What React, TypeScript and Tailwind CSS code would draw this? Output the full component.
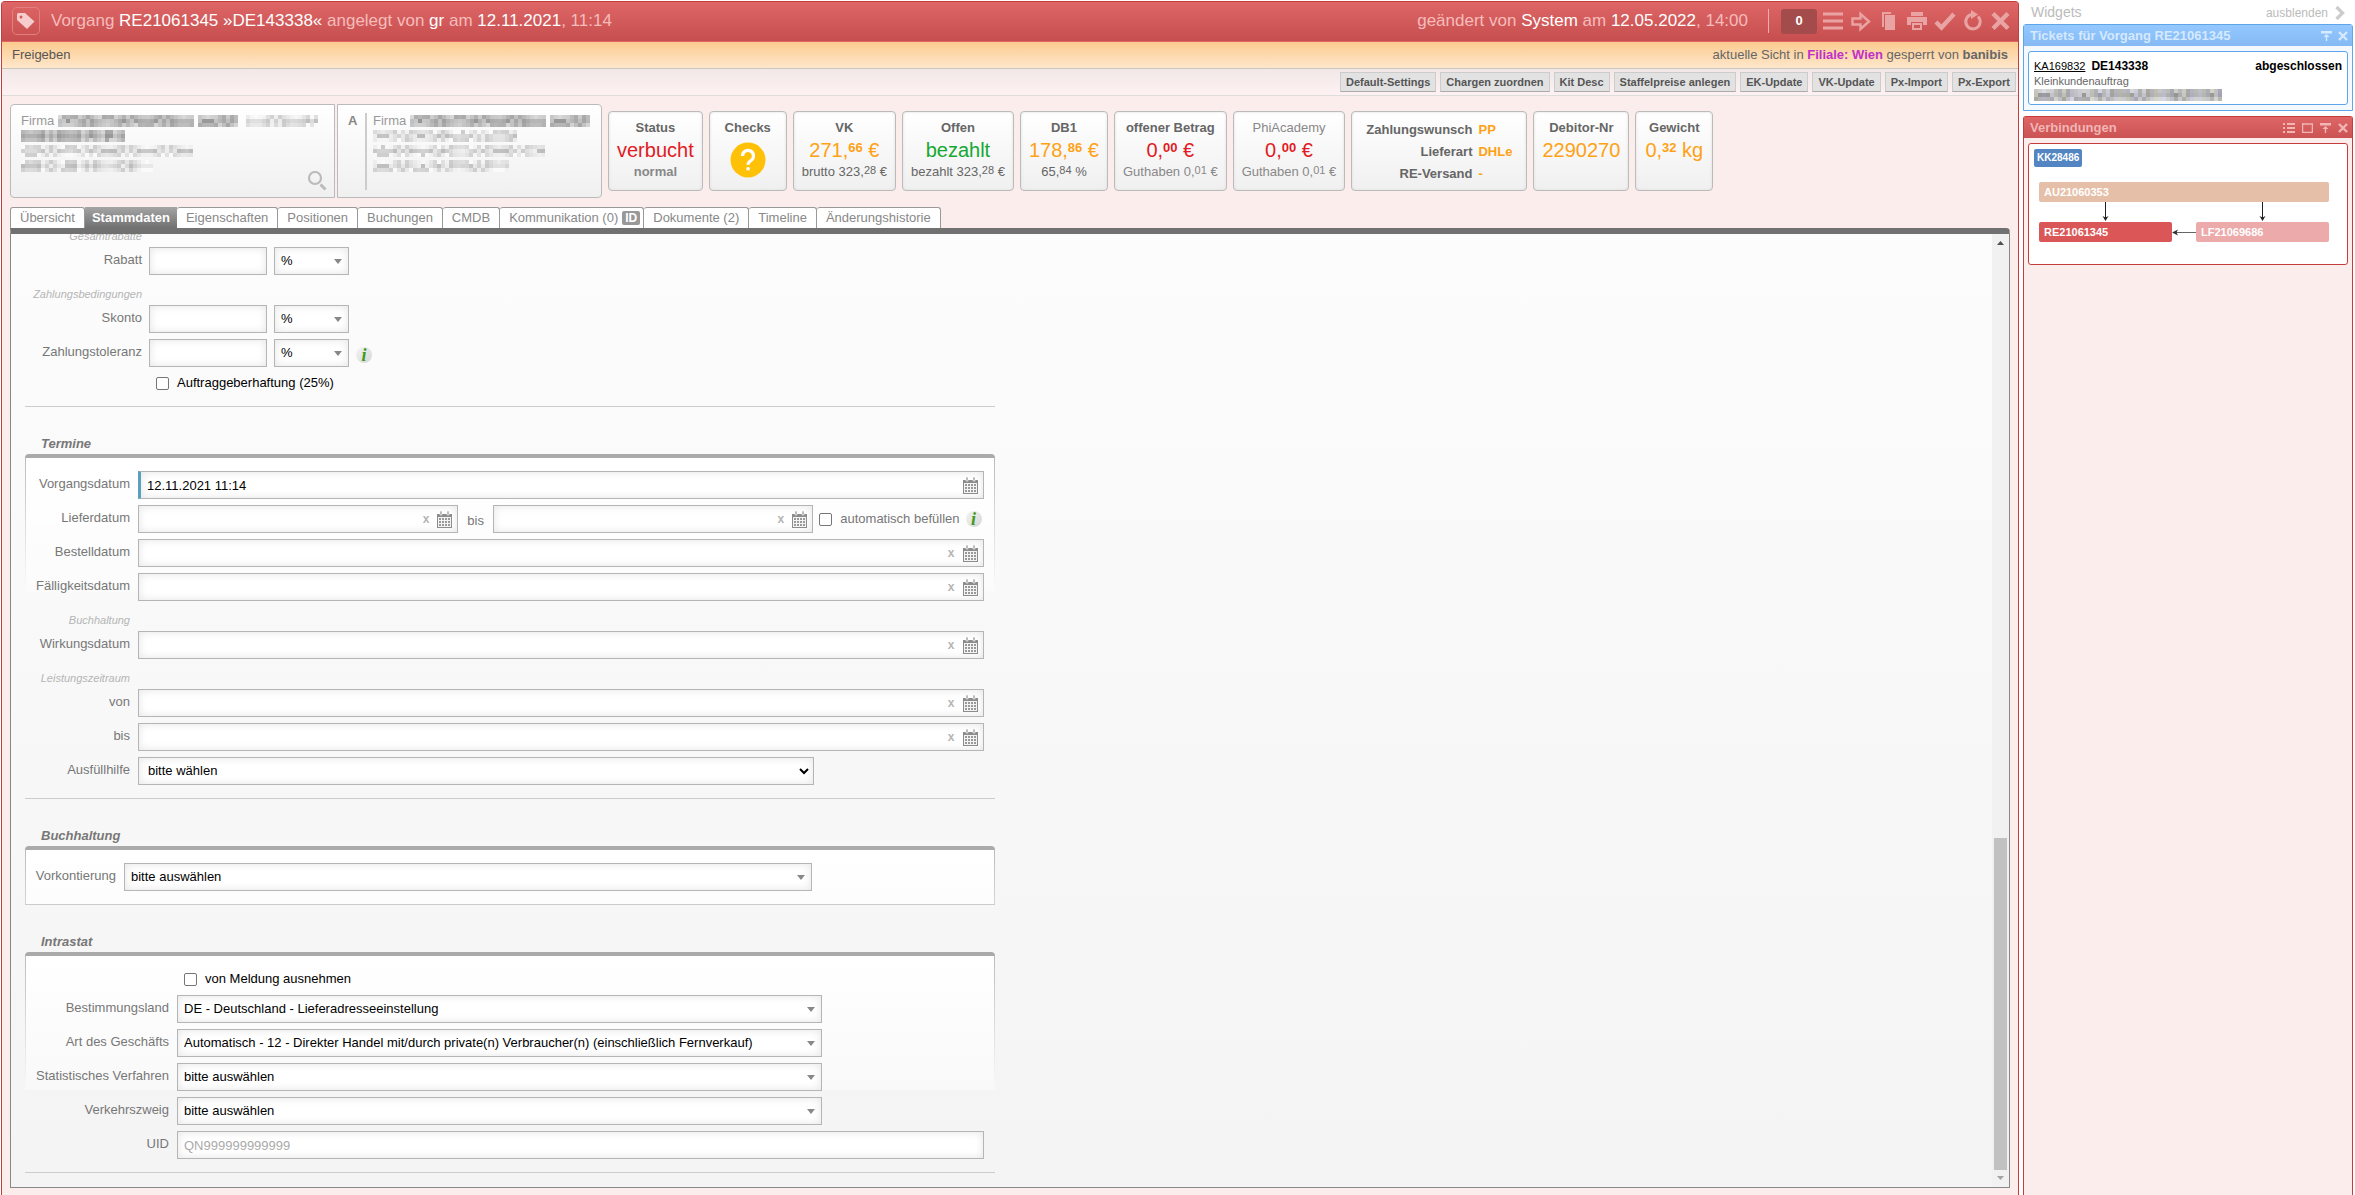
import type { ReactNode } from "react";

/* ------- Data -------  */
const toolbarButtons = [
  "Default-Settings",
  "Chargen zuordnen",
  "Kit Desc",
  "Staffelpreise anlegen",
  "EK-Update",
  "VK-Update",
  "Px-Import",
  "Px-Export",
];

const tabs = [
  { label: "Übersicht" },
  { label: "Stammdaten", active: true },
  { label: "Eigenschaften" },
  { label: "Positionen" },
  { label: "Buchungen" },
  { label: "CMDB" },
  { label: "Kommunikation (0)", badge: "ID" },
  { label: "Dokumente (2)" },
  { label: "Timeline" },
  { label: "Änderungshistorie" },
];

const orderInfos = [
  { label: "Zahlungswunsch", value: "PP" },
  { label: "Lieferart", value: "DHLe" },
  { label: "RE-Versand", value: "-" },
];

const intrastatSelects = [
  { id: "bestimmungsland", label: "Bestimmungsland", value: "DE - Deutschland - Lieferadresseeinstellung" },
  {
    id: "geschaeft",
    label: "Art des Geschäfts",
    value: "Automatisch - 12 - Direkter Handel mit/durch private(n) Verbraucher(n) (einschließlich Fernverkauf)",
  },
  { id: "verfahren", label: "Statistisches Verfahren", value: "bitte auswählen" },
  { id: "verkehrszweig", label: "Verkehrszweig", value: "bitte auswählen" },
];

const fieldClass =
  "h-7 w-full border border-[#b5b5b5] bg-white text-[13px] text-black shadow-[inset_0_0_8px_#e4e4e4] outline-none";

/* ------- Icons -------  */
const CalendarIcon = () => (
  <svg width="15" height="17" viewBox="0 0 15 17" className="block">
    <path d="M0 3h15v14H0z" fill="#8c8c8c" />
    <path d="M1 6h13v10H1z" fill="#f4f4f4" />
    <path d="M3 0h2v4H3zM10 0h2v4h-2z" fill="#a0a0a0" stroke="#fff" strokeWidth="0.6" />
    {[7, 10, 13].map((y) =>
      [2, 5, 8, 11].map((x) => <rect key={`${x}-${y}`} x={x} y={y} width="2" height="2" fill="#999" />)
    )}
  </svg>
);

const ArrowDown = () => (
  <svg width="8" height="5" viewBox="0 0 8 5" className="block">
    <path d="M0 0h8L4 5z" fill="#888" />
  </svg>
);

const ChevronDown = () => (
  <svg width="10" height="7" viewBox="0 0 10 7" className="block">
    <path d="M1 1l4 4 4-4" fill="none" stroke="#000" strokeWidth="2" />
  </svg>
);

const InfoIcon = () => (
  <span className="flex size-4 shrink-0 items-center justify-center rounded-full bg-linear-to-br from-[#f4f4f4] to-[#d6d6d6] font-['Liberation_Serif',serif] text-[18px] leading-4 font-bold text-[#3f9c1c] italic">
    i
  </span>
);

const SearchIcon = () => (
  <svg width="20" height="20" viewBox="0 0 20 20" className="block">
    <circle cx="8" cy="7" r="6" fill="none" stroke="#bbb" strokeWidth="2.200" />
    <path d="M13.500 13.500l5 5" stroke="#bbb" strokeWidth="3" />
  </svg>
);

const CloseIcon = ({ size = 10 }: { size?: number }) => (
  <svg width={size} height={size} viewBox="0 0 10 10" className="block">
    <path d="M1 1l8 8M9 1L1 9" stroke="currentColor" strokeWidth="2.4" />
  </svg>
);

const PinTopIcon = () => (
  <svg width="11" height="10" viewBox="0 0 11 10" className="block" fill="currentColor">
    <path d="M0 0h11v2.5H0zM5.5 3l3 3H6.2v4H4.8V6H2.5z" />
  </svg>
);

const headerIcons = [
  {
    name: "Menü",
    icon: <path d="M0 2h20M0 9h20M0 16h20" stroke="currentColor" strokeWidth="3" />,
  },
  {
    name: "Weiter",
    icon: <path d="M1.500 6.500h8V2l8.500 7.500-8.500 7.500v-4.500h-8z" fill="none" stroke="currentColor" strokeWidth="2.400" />,
  },
  {
    name: "Kopieren",
    icon: <path d="M3 0h9v2H5v13H3zM6 3h10v15H6z" fill="currentColor" />,
  },
  {
    name: "Drucken",
    icon: (
      <path
        d="M4 0h12v4H4zM0 5h20v8h-4v-3H4v3H0zM5 11h10v7H5zM7 13v3h6v-3z"
        fill="currentColor"
        fillRule="evenodd"
      />
    ),
  },
  {
    name: "Speichern",
    icon: <path d="M1 10l5.500 5.500L19 2" fill="none" stroke="currentColor" strokeWidth="4.400" />,
  },
  {
    name: "Neu laden",
    icon: (
      <>
        <path d="M15 4.500A7.200 7.200 0 1 1 9 2.500" fill="none" stroke="currentColor" strokeWidth="3" />
        <path d="M8-2l7 4.500L8 7z" fill="currentColor" />
      </>
    ),
  },
  {
    name: "Schließen",
    icon: <path d="M2 1.500l15 15M17 1.500l-15 15" stroke="currentColor" strokeWidth="4.400" />,
  },
];

/* Mosaic strip that hides personal data */
const Redacted = ({ cols, seed, dark, tint }: { cols: number; seed: number; dark?: boolean; tint?: boolean }) => {
  const base = dark ? 150 : 188;
  const cells = [];
  for (let row = 0; row < 3; row++) {
    for (let col = 0; col < cols; col++) {
      const n = (col * 37 + row * 61 + seed * 17 + ((col * col * 7 + row * seed) % 29) * 11) % 52;
      const edge = row === 1 ? 0 : 16;
      const v = Math.min(base + n + edge, 250);
      const blue = tint ? Math.min(v + ((col * 13 + row) % 30) - 12, 255) : v;
      cells.push(
        <rect key={`${row}-${col}`} x={col * 4} y={row * 4} width="4" height="4" fill={`rgb(${v},${v},${blue})`} />
      );
    }
  }
  return (
    <svg width={cols * 4} height="12" viewBox={`0 0 ${cols * 4} 12`} className="block shrink-0" aria-hidden="true">
      {cells}
    </svg>
  );
};

/* ------- Cards -------  */
const Card = ({ title, light, children }: { title: string; light?: boolean; children: ReactNode }) => (
  <section className="flex h-20 min-w-[78px] flex-col items-center rounded-[4px] border border-[#bbb] bg-linear-to-b from-white to-[#f0f0f0] px-2 pt-2 whitespace-nowrap shadow-[inset_0_0_3px_#ddd]">
    <h3 className={light ? "text-[13px] leading-4 text-[#888]" : "text-[13px] leading-4 font-bold text-[#666]"}>
      {title}
    </h3>
    {children}
  </section>
);

const Big = ({ children, className }: { children: ReactNode; className: string }) => (
  <p className={`h-7 text-[20px] leading-7 ${className}`}>{children}</p>
);

const Cents = ({ children }: { children: ReactNode }) => (
  <span className="align-[5px] text-[13px] leading-none font-bold">{children}</span>
);

const Sub = ({ children, className = "text-[#666]" }: { children: ReactNode; className?: string }) => (
  <p className={`text-[13px] leading-4 ${className}`}>{children}</p>
);

const SubCents = ({ children }: { children: ReactNode }) => (
  <span className="align-[2px] text-[11px] leading-none">{children}</span>
);

/* ------- Form parts -------  */
const SelectField = ({ id, value, native }: { id: string; value: string; native?: boolean }) => (
  <div className="relative w-full">
    <select id={id} className={`${fieldClass} appearance-none ${native ? "pl-[9px]" : "pl-[6px]"} pr-6`}>
      <option>{value}</option>
    </select>
    <span className={`pointer-events-none absolute inset-y-0 flex items-center ${native ? "right-[5px]" : "right-[7px]"}`}>
      {native ? <ChevronDown /> : <ArrowDown />}
    </span>
  </div>
);

const DateField = ({ id, value, marked }: { id: string; value?: string; marked?: boolean }) => (
  <div className="relative flex-1">
    <input
      id={id}
      type="text"
      defaultValue={value}
      className={`${fieldClass} pr-12 pl-[6px] ${marked ? "border-l-[3px] border-l-[#5a9fbe]" : ""}`}
    />
    <span className="absolute inset-y-0 right-[6px] flex items-center gap-2">
      {!marked && (
        <button type="button" aria-label="Datum löschen" className="text-[12px] leading-4 font-bold text-[#b5b5b5]">
          x
        </button>
      )}
      <button type="button" aria-label="Kalender öffnen">
        <CalendarIcon />
      </button>
    </span>
  </div>
);

const Label = ({ id, width, children }: { id: string; width: string; children: ReactNode }) => (
  <label htmlFor={id} className={`${width} shrink-0 text-right text-[13px] leading-[26px] whitespace-nowrap text-[#777]`}>
    {children}
  </label>
);

const SubHeading = ({ width, children }: { width: string; children: ReactNode }) => (
  <h4 className={`${width} h-[18px] pt-1 text-right text-[11px] leading-[18px] text-[#b5b5b5] italic`}>{children}</h4>
);

const CheckBox = ({ id, label, className = "text-black" }: { id: string; label: string; className?: string }) => (
  <div className="flex items-center gap-2">
    <input
      id={id}
      type="checkbox"
      className="size-[13px] appearance-none rounded-[2px] border border-[#767676] bg-white checked:bg-[#0075ff]"
    />
    <label htmlFor={id} className={`text-[13px] leading-5 whitespace-nowrap ${className}`}>
      {label}
    </label>
  </div>
);

const Group = ({ title, closed, children }: { title: string; closed?: boolean; children: ReactNode }) => (
  <section className="mt-[27px]">
    <h3 className="pl-4 text-[13px] leading-5 font-bold text-[#777] italic">{title}</h3>
    <div
      className={`flex flex-col gap-[6px] rounded-t-[4px] border-t-4 border-[#aaa] bg-[linear-gradient(#bbb,#bbb0),linear-gradient(#bbb,#bbb0),linear-gradient(#fff,#fff6)] bg-[length:1px_134px,1px_134px,100%_134px] bg-[position:left_top,right_top,left_top] bg-no-repeat pt-[13px] pr-[11px] pb-[13px] pl-px ${closed ? "border-b border-b-[#ccc]" : ""}`}
    >
      {children}
    </div>
    {!closed && <hr className="border-[#ccc]" />}
  </section>
);

const Scrollbar = () => (
  <div className="flex w-[17px] flex-col items-center bg-[#f1f1f1]" aria-hidden="true">
    <svg width="17" height="17" viewBox="0 0 17 17" className="block">
      <path d="M5 11h7L8.500 7z" fill="#505050" />
    </svg>
    <div className="flex-[587]" />
    <div className="w-[13px] flex-[332] bg-[#c1c1c1]" />
    <svg width="17" height="17" viewBox="0 0 17 17" className="block">
      <path d="M5 6h7l-3.500 4z" fill="#a3a3a3" />
    </svg>
  </div>
);

const StammdatenForm = () => (
  <form className="w-1/2 pr-[7px] pb-[14px] pl-[14px]">
    <div className="-mt-[11px] flex flex-col gap-[6px]">
      <SubHeading width="w-[117px]">Gesamtrabatte</SubHeading>
      {[
        { id: "rabatt", label: "Rabatt" },
        { id: "skonto", label: "Skonto" },
        { id: "toleranz", label: "Zahlungstoleranz" },
      ].map(({ id, label }) => (
        <div key={id} className="contents">
          {id === "skonto" && <SubHeading width="w-[117px]">Zahlungsbedingungen</SubHeading>}
          <div className="flex gap-[7px]">
            <Label id={id} width="w-[117px]">{label}</Label>
            <input id={id} type="text" className={`${fieldClass} max-w-[118px] px-[6px]`} />
            <div className="w-[75px]">
              <SelectField id={`${id}-einheit`} value="%" />
            </div>
            {id === "toleranz" && (
              <span className="flex items-center pt-1">
                <InfoIcon />
              </span>
            )}
          </div>
        </div>
      ))}
      <div className="pl-[131px]">
        <CheckBox id="haftung" label="Auftraggeberhaftung (25%)" />
      </div>
    </div>
    <hr className="mt-[13px] border-[#ccc]" />

    <Group title="Termine">
      <div className="flex gap-2">
        <Label id="vorgangsdatum" width="w-[104px]">Vorgangsdatum</Label>
        <DateField id="vorgangsdatum" value="12.11.2021 11:14" marked />
      </div>
      <div className="flex gap-2">
        <Label id="lieferdatum" width="w-[104px]">Lieferdatum</Label>
        <div className="flex flex-1 items-center gap-[6px]">
          <DateField id="lieferdatum" />
          <label htmlFor="lieferdatum-bis" className="px-[3px] pt-1 text-[13px] leading-5 text-[#777]">
            bis
          </label>
          <DateField id="lieferdatum-bis" />
          <CheckBox id="auto" label="automatisch befüllen" className="text-[#777]" />
          <span className="pr-[2px]">
            <InfoIcon />
          </span>
        </div>
      </div>
      <div className="flex gap-2">
        <Label id="bestelldatum" width="w-[104px]">Bestelldatum</Label>
        <DateField id="bestelldatum" />
      </div>
      <div className="flex gap-2">
        <Label id="faelligkeit" width="w-[104px]">Fälligkeitsdatum</Label>
        <DateField id="faelligkeit" />
      </div>
      <SubHeading width="w-[104px]">Buchhaltung</SubHeading>
      <div className="flex gap-2">
        <Label id="wirkung" width="w-[104px]">Wirkungsdatum</Label>
        <DateField id="wirkung" />
      </div>
      <SubHeading width="w-[104px]">Leistungszeitraum</SubHeading>
      <div className="flex gap-2">
        <Label id="von" width="w-[104px]">von</Label>
        <DateField id="von" />
      </div>
      <div className="flex gap-2">
        <Label id="bis" width="w-[104px]">bis</Label>
        <DateField id="bis" />
      </div>
      <div className="flex gap-2">
        <Label id="ausfuellhilfe" width="w-[104px]">Ausfüllhilfe</Label>
        <div className="flex-1">
          <div className="w-4/5">
            <SelectField id="ausfuellhilfe" value="bitte wählen" native />
          </div>
        </div>
      </div>
    </Group>

    <Group title="Buchhaltung" closed>
      <div className="flex gap-2">
        <Label id="vorkontierung" width="w-[90px]">Vorkontierung</Label>
        <div className="flex-1">
          <div className="w-4/5">
            <SelectField id="vorkontierung" value="bitte auswählen" />
          </div>
        </div>
      </div>
    </Group>

    <Group title="Intrastat">
      <div className="pl-[158px]">
        <CheckBox id="meldung" label="von Meldung ausnehmen" />
      </div>
      {intrastatSelects.map(({ id, label, value }) => (
        <div className="flex gap-2" key={id}>
          <Label id={id} width="w-[143px]">{label}</Label>
          <div className="flex-1">
            <div className="w-4/5">
              <SelectField id={id} value={value} />
            </div>
          </div>
        </div>
      ))}
      <div className="flex gap-2">
        <Label id="uid" width="w-[143px]">UID</Label>
        <input
          id="uid"
          type="text"
          placeholder="QN999999999999"
          className={`${fieldClass} px-[6px] placeholder:text-[#aaa]`}
        />
      </div>
    </Group>
  </form>
);

const Vorgang = () => (
  <main className="flex min-w-0 flex-1 flex-col rounded-t-[4px] border border-b-0 border-[#c43c3c] bg-[#fceded]">
    <header className="flex h-10 items-center border-b border-[#e06464] bg-linear-to-b from-[#df6666] to-[#c64e4e] pr-[7px] pb-px pl-[10px] text-[17px] text-[#f6bcbc]">
      <span className="flex h-7 w-7 items-center justify-center rounded-[5px] border border-[#e28080]">
        <svg width="20" height="18" viewBox="0 0 20 18" className="block">
          <path d="M1 2.500Q1 1 2.500 1H9l9.500 8.500-7.500 7.500L1 8z" fill="#f6cccc" />
          <circle cx="5" cy="5" r="1.500" fill="#d65c5c" />
        </svg>
      </span>
      <h1 className="ml-[11px] flex-1 whitespace-nowrap">
        Vorgang <span className="text-white">RE21061345 »DE143338«</span> angelegt von <span className="text-white">gr</span> am{" "}
        <span className="text-white">12.11.2021</span>, 11:14
      </h1>
      <p className="whitespace-nowrap">
        geändert von <span className="text-white">System</span> am <span className="text-white">12.05.2022</span>, 14:00
      </p>
      <div className="ml-5 flex h-6 items-center border-l border-[#efaeae] pl-3">
        <button type="button" className="h-[25px] w-9 rounded-[3px] bg-[#a44c4c] text-[13px] font-bold text-white">
          0
        </button>
      </div>
      <div className="ml-[6px] flex gap-2 text-[#e9a3a3]">
        {headerIcons.map(({ name, icon }) => (
          <button type="button" aria-label={name} key={name}>
            <svg width="20" height="18" viewBox="0 0 20 18" className="block overflow-visible">
              {icon}
            </svg>
          </button>
        ))}
      </div>
    </header>

    <div className="flex h-[27px] items-center justify-between border-b border-[#ccc5bb] bg-linear-to-b from-[#fbca8e] to-[#fee7cb] px-[10px] text-[13px] text-[#666]">
      <button type="button" className="text-[#555]">
        Freigeben
      </button>
      <p>
        aktuelle Sicht in <strong className="text-[#c030c8]">Filiale: Wien</strong> gesperrt von <strong>banibis</strong>
      </p>
    </div>

    <div className="flex h-[27px] items-center justify-end gap-1 border-b border-[#ddd] bg-linear-to-b from-[#f3e8e8] to-[#fdf1f1] px-[2px]">
      {toolbarButtons.map((label) => (
        <button
          type="button"
          key={label}
          className="h-5 border border-[#ccc] border-b-[#aaa] bg-[#e2e2e2] px-[5px] text-[11px] leading-4 font-bold text-[#555]"
        >
          {label}
        </button>
      ))}
    </div>

    <div className="flex flex-1 flex-col px-2 pb-2">
      <div className="flex items-center gap-[6px] pt-2">
        <div className="flex gap-[2px] text-[13px] leading-[15px] text-[#999]">
          <section className="relative h-[94px] w-[325px] rounded-l-[4px] border border-[#bbb] bg-linear-to-b from-white to-[#f0f0f0] px-[10px] pt-2">
            <div className="flex items-center gap-1">
              Firma
              <Redacted cols={34} seed={3} dark />
              <Redacted cols={10} seed={5} dark />
              <span className="pl-1">
                <Redacted cols={18} seed={8} />
              </span>
            </div>
            <div className="flex flex-col gap-[3px] pt-[2px]">
              <Redacted cols={26} seed={4} dark />
              <Redacted cols={43} seed={6} />
              <Redacted cols={33} seed={9} />
            </div>
            <button type="button" aria-label="Kunde suchen" className="absolute right-[7px] bottom-[6px]">
              <SearchIcon />
            </button>
          </section>
          <section className="flex h-[94px] w-[265px] rounded-r-[4px] border border-[#bbb] bg-linear-to-b from-white to-[#f0f0f0] pt-2 pb-[7px] pl-[10px]">
            <strong className="w-[17px] text-[#888]">A</strong>
            <div className="border-l-2 border-[#ccc] pl-[6px]">
              <div className="flex items-center gap-1">
                Firma
                <Redacted cols={34} seed={3} dark />
                <Redacted cols={10} seed={5} dark />
              </div>
              <div className="flex flex-col gap-[3px] pt-[2px]">
                <Redacted cols={36} seed={7} />
                <Redacted cols={43} seed={2} />
                <Redacted cols={34} seed={5} />
              </div>
            </div>
          </section>
        </div>

        <Card title="Status">
          <Big className="text-[#e01b24]">verbucht</Big>
          <Sub className="font-bold text-[#888]">normal</Sub>
        </Card>
        <Card title="Checks">
          <svg width="36" height="36" viewBox="0 0 36 36" className="mt-[6px] block">
            <circle cx="18" cy="18" r="17.500" fill="#ffc107" />
            <path
              d="M12.500 14a5.500 5.500 0 1 1 8.500 4.500c-2 1.400-3 2.200-3 4.200"
              fill="none"
              stroke="#fff"
              strokeWidth="3.200"
            />
            <rect x="16.300" y="25" width="3.500" height="3.500" rx="1.500" fill="#fff" />
          </svg>
        </Card>
        <Card title="VK">
          <Big className="text-[#ffa114]">271,<Cents>66</Cents> €</Big>
          <Sub>brutto 323,<SubCents>28</SubCents> €</Sub>
        </Card>
        <Card title="Offen">
          <Big className="text-[#14a832]">bezahlt</Big>
          <Sub>bezahlt 323,<SubCents>28</SubCents> €</Sub>
        </Card>
        <Card title="DB1">
          <Big className="text-[#ffa114]">178,<Cents>86</Cents> €</Big>
          <Sub>65,<SubCents>84</SubCents> %</Sub>
        </Card>
        <Card title="offener Betrag">
          <Big className="text-[#e01b24]">0,<Cents>00</Cents> €</Big>
          <Sub className="text-[#888]">Guthaben 0,<SubCents>01</SubCents> €</Sub>
        </Card>
        <Card title="PhiAcademy" light>
          <Big className="text-[#e01b24]">0,<Cents>00</Cents> €</Big>
          <Sub className="text-[#888]">Guthaben 0,<SubCents>01</SubCents> €</Sub>
        </Card>
        <dl className="grid h-20 grid-cols-[auto_auto] content-start gap-x-[6px] rounded-[4px] border border-[#bbb] bg-linear-to-b from-white to-[#f0f0f0] px-[14px] pt-[7px] text-[13px] leading-[22px] font-bold whitespace-nowrap shadow-[inset_0_0_3px_#ddd]">
          {orderInfos.map(({ label, value }) => (
            <div className="contents" key={label}>
              <dt className="text-right text-[#666]">{label}</dt>
              <dd className="text-[#ffa114]">{value}</dd>
            </div>
          ))}
        </dl>
        <Card title="Debitor-Nr">
          <Big className="text-[#ffa114]">2290270</Big>
        </Card>
        <Card title="Gewicht">
          <Big className="text-[#ffa114]">0,<Cents>32</Cents> kg</Big>
        </Card>
      </div>

      <nav className="flex pt-[9px]">
        {tabs.map(({ label, active, badge }) => (
          <a
            href="#"
            key={label}
            className={
              active
                ? "flex h-[21px] items-center bg-linear-to-b from-[#a5a5a5] to-[#717171] px-[7px] text-[13px] font-bold text-white"
                : "flex h-[21px] items-center gap-1 rounded-t-[3px] border-t border-r border-[#999] bg-white px-[9px] text-[13px] text-[#888] first:border-l"
            }
          >
            {label}
            {badge && (
              <span className="-mr-[6px] rounded-[2px] bg-[#999] px-[3px] text-[12px] leading-[14px] font-bold text-white">
                {badge}
              </span>
            )}
          </a>
        ))}
      </nav>

      <div className="flex flex-1 flex-col rounded-tr-[4px] border border-t-[6px] border-[#888] border-t-[#717171] bg-linear-to-b from-[#fcfcfc] to-[#f4f4f4]">
        <div className="flex flex-1 overflow-hidden">
          <div className="flex-1">
            <StammdatenForm />
          </div>
          <Scrollbar />
        </div>
      </div>
    </div>
  </main>
);

const Widgets = () => (
  <aside className="flex w-[330px] shrink-0 flex-col">
    <div className="flex h-[23px] items-center pr-2 pl-2 text-[#bbb]">
      <h2 className="flex-1 text-[14px]">Widgets</h2>
      <button type="button" className="flex items-center gap-[7px] text-[12px]">
        ausblenden
        <svg width="10" height="14" viewBox="0 0 10 14" className="block">
          <path d="M1.500 1l6 6-6 6" fill="none" stroke="#ccc" strokeWidth="3.400" />
        </svg>
      </button>
    </div>

    <section className="rounded-t-[3px] border border-[#5ea5ea] bg-[#f3f9fe]">
      <header className="flex h-[21px] items-center gap-[6px] bg-linear-to-b from-[#94c8ff] to-[#85b9f3] pr-1 pl-[6px] text-[#d5e9ff]">
        <h3 className="flex-1 text-[13px] font-bold">Tickets für Vorgang RE21061345</h3>
        <PinTopIcon />
        <CloseIcon />
      </header>
      <article className="m-1 mt-[5px] mb-[5px] h-[54px] rounded-[3px] border border-[#5ea5ea] bg-white px-[5px] pt-[6px] text-[11px] leading-[15px] text-[#666]">
        <div className="flex items-center gap-[6px] text-[12px] leading-4 font-bold text-black">
          <a href="#" className="text-[11px] font-normal underline">
            KA169832
          </a>
          <span className="flex-1">DE143338</span>
          <span>abgeschlossen</span>
        </div>
        <p>Kleinkundenauftrag</p>
        <Redacted cols={47} seed={5} tint dark />
      </article>
    </section>

    <section className="mt-[5px] flex-1 rounded-t-[3px] border border-b-0 border-[#c43c3c] bg-[#fceded]">
      <header className="flex h-[21px] items-center gap-[7px] bg-linear-to-b from-[#df6666] to-[#cb5353] pr-1 pl-[6px] text-[#f1b5b5]">
        <h3 className="flex-1 text-[13px] font-bold">Verbindungen</h3>
        <svg width="12" height="10" viewBox="0 0 12 10" className="block" fill="currentColor">
          <path d="M0 0h2v2H0zM4 0h8v2H4zM0 4h2v2H0zM4 4h8v2H4zM0 8h2v2H0zM4 8h8v2H4z" />
        </svg>
        <svg width="11" height="10" viewBox="0 0 11 10" className="block">
          <path d="M.5 0v9.500h10V1H.5" fill="none" stroke="currentColor" strokeWidth="1.500" />
        </svg>
        <PinTopIcon />
        <CloseIcon />
      </header>
      <div className="m-1 mt-[5px] rounded-[3px] border border-[#c43c3c] bg-white px-[5px] pt-[5px] pb-[22px] text-[11px] leading-5 font-bold text-white">
        <a href="#" className="block w-fit rounded-[2px] bg-[#5285c2] px-[3px] text-[10px] leading-[18px]">
          KK28486
        </a>
        <div className="mt-[15px] mr-[13px] ml-[5px]">
          <a href="#" className="block rounded-[2px] bg-[#e6bfa8] px-[5px]">
            AU21060353
          </a>
          <div className="flex justify-between">
            {[0, 1].map((n) => (
              <span key={n} className="flex w-[133px] justify-center">
                <svg width="7" height="20" viewBox="0 0 7 20" className="block">
                  <path d="M3.500 0v18" stroke="#222" />
                  <path d="M.5 14l3 5 3-5-3 1.500z" fill="#222" />
                </svg>
              </span>
            ))}
          </div>
          <div className="flex items-center justify-between">
            <a href="#" className="w-[133px] rounded-[2px] bg-[#db5656] px-[5px]">
              RE21061345
            </a>
            <svg width="24" height="7" viewBox="0 0 24 7" className="block">
              <path d="M1 3.500h23" stroke="#666" />
              <path d="M6 .5l-6 3 6 3-1.500-3z" fill="#333" />
            </svg>
            <a href="#" className="w-[133px] rounded-[2px] bg-[#edaaab] px-[5px]">
              LF21069686
            </a>
          </div>
        </div>
      </div>
    </section>
  </aside>
);

const App = () => {
  return (
    <div className="flex min-h-screen gap-1 bg-white pt-px pr-[2px] pl-px font-['Liberation_Sans',Arial,sans-serif]">
      <Vorgang />
      <Widgets />
    </div>
  );
};

export default App;
